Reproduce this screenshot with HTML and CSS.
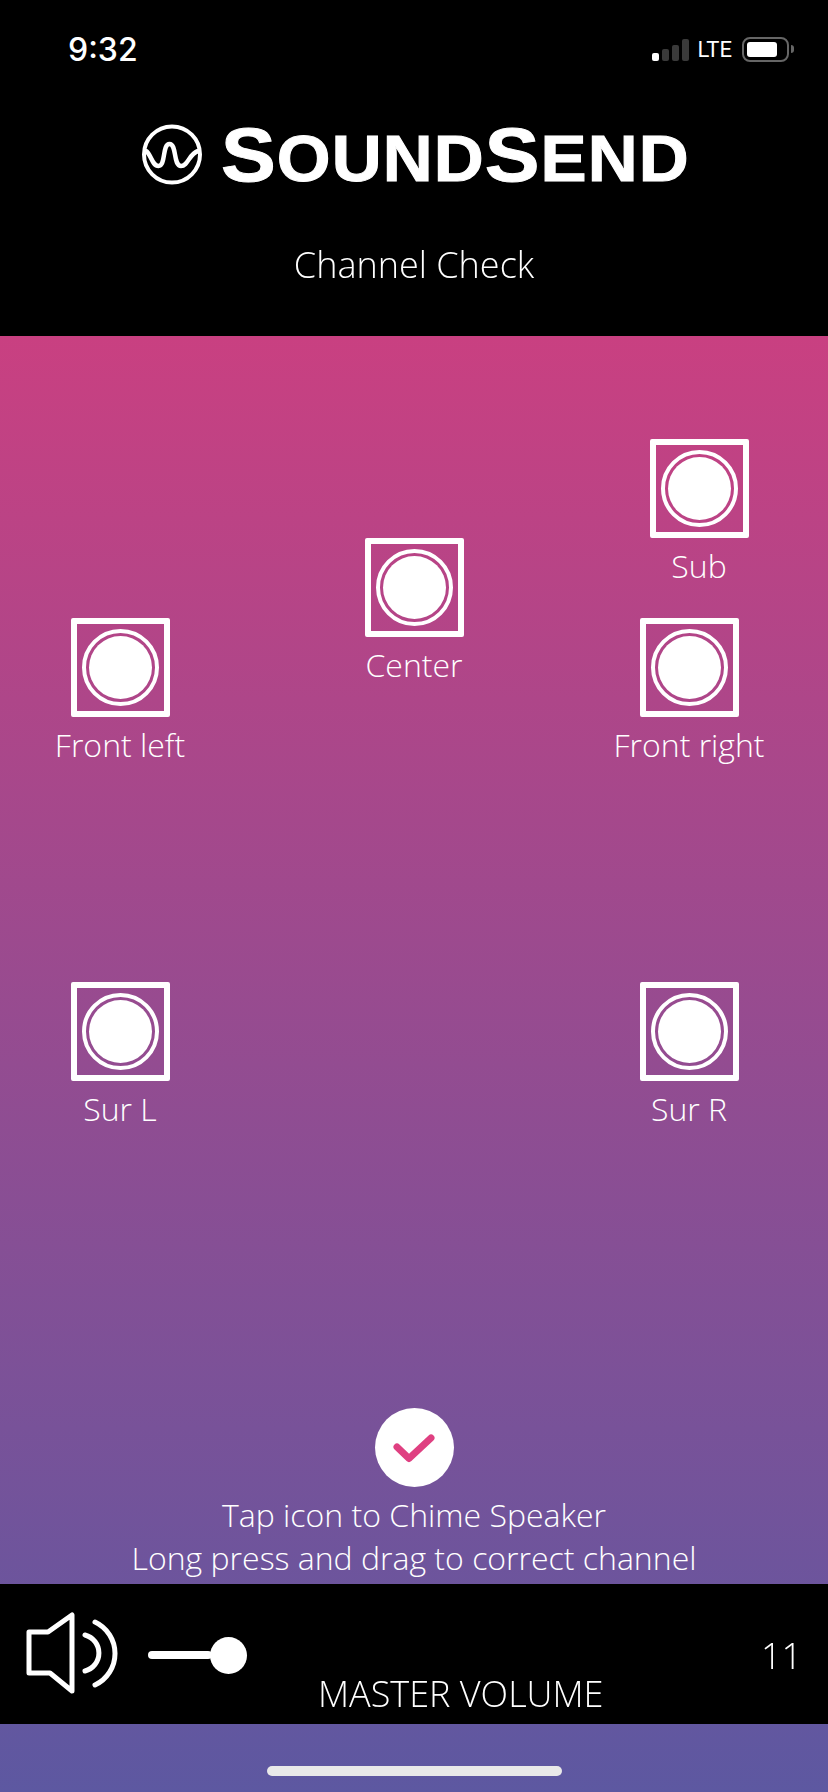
FILE: index.html
```html
<!doctype html>
<html>
  <head>
    <title>SoundSend - Channel Check</title>
    <meta name="viewport" content="width = device-width, initial-scale = 1" />
    <link rel="stylesheet" href="styles.css">
  </head>
  <body>
    <div id="top">
      <div id="status">
        <span id="clock">9:32</span>
        <div id="indicators">
          <div id="signal">
            <i class="bar bar1"></i>
            <i class="bar bar2"></i>
            <i class="bar bar3"></i>
            <i class="bar bar4"></i>
          </div>
          <span id="network">LTE</span>
          <div id="battery"><div id="charge"></div></div>
          <div id="batterycap"></div>
        </div>
      </div>
      <div id="logo">
        <svg id="logomark" width="60" height="61" viewBox="0 0 60 61">
          <circle cx="30" cy="30.500" r="28" fill="none" stroke="white" stroke-width="4" />
          <path d="M4 27 C9 30 10 42 16.500 42 C24 42 20 20 27.500 20 C35 20 31 42 39 42 C46 42 47 30 56 27" fill="none" stroke="white" stroke-width="4.500" stroke-linecap="round" />
        </svg>
        <span id="wordmark"><b>S</b>OUND<b>S</b>END</span>
      </div>
      <h1 id="title">Channel Check</h1>
    </div>
    <div id="backdrop">
      <div id="stage">
        <div class="speaker front-left">
          <div class="cone"><div class="disc"></div></div>
          <span>Front left</span>
        </div>
        <div class="speaker center">
          <div class="cone"><div class="disc"></div></div>
          <span>Center</span>
        </div>
        <div class="speaker sub">
          <div class="cone"><div class="disc"></div></div>
          <span>Sub</span>
        </div>
        <div class="speaker front-right">
          <div class="cone"><div class="disc"></div></div>
          <span>Front right</span>
        </div>
        <div class="speaker sur-left">
          <div class="cone"><div class="disc"></div></div>
          <span>Sur L</span>
        </div>
        <div class="speaker sur-right">
          <div class="cone"><div class="disc"></div></div>
          <span>Sur R</span>
        </div>
        <div id="hint">
          <div id="done">
            <svg width="44" height="34" viewBox="0 0 44 34">
              <path d="M5 16 L17 27.500 L39 7" fill="none" stroke="#df4081" stroke-width="7" stroke-linecap="round" stroke-linejoin="round" />
            </svg>
          </div>
          <p>Tap icon to Chime Speaker<br />Long press and drag to correct channel</p>
        </div>
      </div>
      <div id="volume">
        <div id="volumerow">
          <svg id="volumeicon" width="96" height="90" viewBox="0 0 96 90">
            <path d="M5 22 L24 22 L48 5 L48 81 L26 63 L5 63 Z" fill="none" stroke="white" stroke-width="5" stroke-linejoin="round" />
            <path d="M61 25 A18.600 18.600 0 0 1 61 61" fill="none" stroke="white" stroke-width="5" stroke-linecap="round" />
            <path d="M71 12 A34.800 34.800 0 0 1 71 75" fill="none" stroke="white" stroke-width="5" stroke-linecap="round" />
          </svg>
          <div id="slider"><div id="track"></div><div id="thumb"></div></div>
          <span id="level">11</span>
        </div>
        <div id="volumelabel">MASTER VOLUME</div>
      </div>
      <div id="homearea"><div id="homebar"></div></div>
    </div>
  </body>
</html>
```

FILE: styles.css
```css
body,
html {
  height: 100%;
  margin: 0;
  background-color: black;
  color: white;
}

body {
  display: flex;
  flex-direction: column;
  width: 828px;
  height: 1792px;
  overflow: hidden;
  font-family: "Open Sans", sans-serif;
  font-weight: 300;
}

/* own layer, so the light text is smoothed in grey like the phone does */
#title,
#level,
#volumelabel {
  will-change: transform;
}

#top {
  height: 336px;
  display: flex;
  flex-direction: column;
  flex-shrink: 0;
}

#status {
  display: flex;
  justify-content: space-between;
  align-items: center;
  height: 50px;
  padding: 24px 34px 0 68px;
}

#clock {
  font-family: Inter, sans-serif;
  font-weight: 500;
  font-size: 32px;
}

#indicators {
  display: flex;
  align-items: center;
}

#signal {
  display: flex;
  align-items: flex-end;
  gap: 3px;
  height: 22px;
  margin-top: 1px;
}

.bar {
  display: block;
  width: 7px;
  border-radius: 2px;
  background-color: #3a3a3a;
}

.bar1 {
  height: 8px;
  background-color: white;
}

.bar2 {
  height: 12px;
}

.bar3 {
  height: 16px;
}

.bar4 {
  height: 22px;
}

#network {
  font-family: Roboto, sans-serif;
  font-weight: 400;
  font-size: 22px;
  margin: 0 10px 0 8px;
}

#battery {
  box-sizing: border-box;
  width: 47px;
  height: 25px;
  padding: 3px;
  border: 2px solid #666666;
  border-radius: 8px;
}

#charge {
  width: 30px;
  height: 100%;
  border-radius: 3px;
  background-color: white;
}

#batterycap {
  width: 3px;
  height: 8px;
  margin-left: 2px;
  border-radius: 0 3px 3px 0;
  background-color: #666666;
}

#logo {
  display: flex;
  align-items: center;
  margin: 52px 0 0 142px;
  height: 62px;
}

#logomark {
  margin-bottom: 5px;
}

#wordmark {
  margin-left: 19px;
  font-family: "Liberation Sans", sans-serif;
  font-weight: 700;
  font-size: 64px;
  line-height: 62px;
  letter-spacing: 1px;
  white-space: nowrap;
  -webkit-text-stroke: 1px white;
  transform: scaleX(1.08);
  transform-origin: left center;
}

#wordmark b {
  font-size: 76px;
}

#title {
  margin: 54px 0 0;
  text-align: center;
  font-size: 36px;
  font-weight: 300;
  line-height: 46px;
}

#backdrop {
  flex: 1;
  display: flex;
  flex-direction: column;
  background: linear-gradient(#c94081, #5d58a1);
}

#stage {
  position: relative;
  height: 1248px;
}

.speaker {
  position: absolute;
  display: flex;
  flex-direction: column;
  align-items: center;
  width: 200px;
  font-size: 32px;
  line-height: 40px;
}

.speaker span {
  margin-top: 8px;
}

.front-left {
  left: 20px;
  top: 282px;
}

.center {
  left: 314px;
  top: 202px;
}

.sub {
  left: 599px;
  top: 103px;
}

.front-right {
  left: 589px;
  top: 282px;
}

.sur-left {
  left: 20px;
  top: 646px;
}

.sur-right {
  left: 589px;
  top: 646px;
}

.cone {
  box-sizing: border-box;
  display: flex;
  align-items: center;
  justify-content: center;
  width: 99px;
  height: 99px;
  border: 6px solid white;
  border-radius: 2px;
}

.disc {
  width: 63px;
  height: 63px;
  border-radius: 50%;
  background-color: white;
  outline: 4px solid white;
  outline-offset: 3px;
}

#hint {
  position: absolute;
  left: 0;
  right: 0;
  bottom: 5px;
  display: flex;
  flex-direction: column;
  align-items: center;
}

#hint p {
  margin: 6px 0 0;
  text-align: center;
  font-size: 32px;
  line-height: 43px;
}

#done {
  display: flex;
  align-items: center;
  justify-content: center;
  width: 79px;
  height: 79px;
  border-radius: 50%;
  background-color: white;
}

#volume {
  height: 140px;
  background-color: black;
}

#volumerow {
  display: flex;
  align-items: center;
  height: 90px;
  padding: 26px 26px 0 24px;
  margin-bottom: -29px;
}

#slider {
  display: flex;
  align-items: center;
  margin-left: 28px;
}

#track {
  width: 64px;
  height: 8px;
  margin-right: -2px;
  border-radius: 4px;
  background-color: white;
}

#thumb {
  width: 37px;
  height: 37px;
  border-radius: 50%;
  background-color: white;
}

#level {
  margin-left: auto;
  font-size: 36px;
}

#volumelabel {
  padding-left: 318px;
  font-size: 36px;
  line-height: 46px;
}

#homearea {
  flex: 1;
  display: flex;
  justify-content: center;
  padding-top: 42px;
}

#homebar {
  width: 295px;
  height: 10px;
  border-radius: 5px;
  background-color: #e9e9e9;
}
```
